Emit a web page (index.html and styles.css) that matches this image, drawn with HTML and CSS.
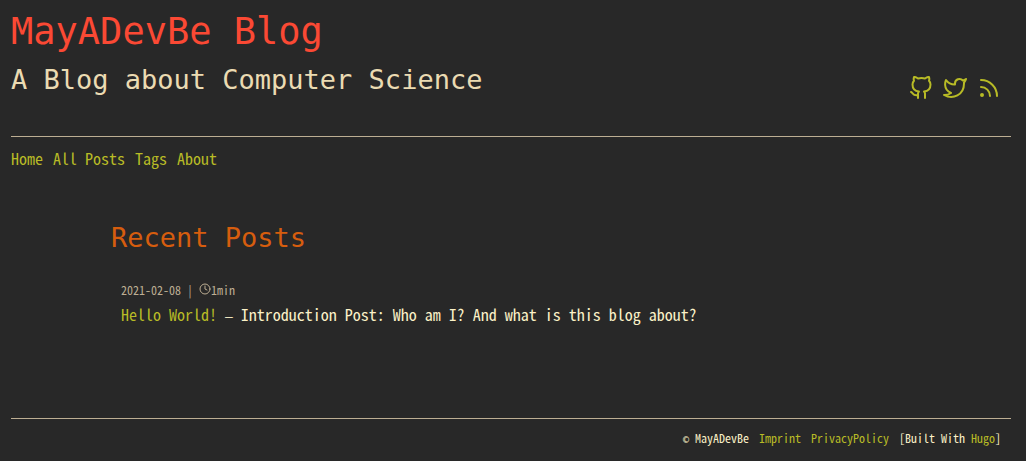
FILE: index.html
```html
<!DOCTYPE html>
<html lang="en">
<head>
<meta charset="utf-8">
<meta name="viewport" content="width=device-width, initial-scale=1">
<title>MayADevBe Blog</title>
<link rel="stylesheet" href="styles.css">
</head>
<body>
<header class="site-header">
  <div class="branding">
    <h1 class="site-title">MayADevBe Blog</h1>
    <p class="site-subtitle">A Blog about Computer Science</p>
  </div>
  <div class="social">
    <a href="#" aria-label="GitHub"><svg class="icon" viewBox="0 0 24 24"><path d="M9 19c-5 1.500-5-2.500-7-3m14 6v-3.870a3.370 3.370 0 0 0-.94-2.610c3.140-.35 6.440-1.540 6.440-7A5.440 5.440 0 0 0 20 4.770 5.070 5.070 0 0 0 19.910 1S18.730.65 16 2.480a13.380 13.380 0 0 0-7 0C6.270.65 5.090 1 5.090 1A5.070 5.070 0 0 0 5 4.770a5.440 5.440 0 0 0-1.500 3.780c0 5.420 3.300 6.610 6.440 7A3.370 3.370 0 0 0 9 18.130V22"/></svg></a>
    <a href="#" aria-label="Twitter"><svg class="icon" viewBox="0 0 24 24"><path d="M23 3a10.900 10.900 0 0 1-3.140 1.530 4.480 4.480 0 0 0-7.860 3v1A10.660 10.660 0 0 1 3 4s-4 9 5 13a11.640 11.640 0 0 1-7 2c9 5 20 0 20-11.500a4.500 4.500 0 0 0-.08-.83A7.720 7.720 0 0 0 23 3z"/></svg></a>
    <a href="#" aria-label="RSS"><svg class="icon" viewBox="0 0 24 24"><circle cx="5" cy="19" r="1"/><path d="M4 4a16 16 0 0 1 16 16M4 11a9 9 0 0 1 9 9"/></svg></a>
  </div>
</header>
<nav class="site-nav">
  <a href="#">Home</a>
  <a href="#">All Posts</a>
  <a href="#">Tags</a>
  <a href="#">About</a>
</nav>
<main class="content">
  <h2 class="section-title">Recent Posts</h2>
  <article class="post">
    <p class="post-meta">2021-02-08 | <svg class="clock" viewBox="0 0 24 24"><circle cx="12" cy="12" r="10"/><path d="M12 6v6l4 2"/></svg>1min</p>
    <p class="post-summary"><a href="#">Hello World!</a> <span class="dash">—</span> Introduction Post: Who am I? And what is this blog about?</p>
  </article>
</main>
<footer class="site-footer">
  <span><span class="copyright">©</span> MayADevBe</span>
  <a href="#">Imprint</a>
  <a href="#">PrivacyPolicy</a>
  <span>[Built With <a href="#">Hugo</a>]</span>
</footer>
</body>
</html>
```
FILE: styles.css
```css
* { box-sizing: border-box; }
body {
  margin: 0;
  padding: 0 15px 0 11px;
  background: #282828;
  color: #fbf1c7;
  font: 16px/24px "Noto Sans Mono CJK SC", "DejaVu Sans Mono", monospace;
}
h1, h2, p { margin: 0; font-weight: 400; }
a { color: #b8bb26; text-decoration: none; }
.site-header {
  display: flex;
  justify-content: space-between;
  align-items: flex-end;
  padding: 8px 10px 36px 0;
  border-bottom: 1px solid #bdae93;
}
.site-title, .site-subtitle, .section-title { font-family: "DejaVu Sans Mono", monospace; }
.site-title { color: #fb4934; font-size: 37px; line-height: 48px; }
.site-subtitle { padding-top: 4px; color: #ebdbb2; font-size: 27px; line-height: 40px; }
.social { display: flex; gap: 10px; }
.icon {
  display: block;
  width: 24px;
  height: 24px;
  fill: none;
  stroke: currentColor;
  stroke-width: 2;
  stroke-linecap: round;
  stroke-linejoin: round;
}
.site-nav { display: flex; gap: 10px; padding-top: 9px; }
.content { padding: 48px 100px 0; }
.section-title { color: #d65d0e; font-size: 27px; line-height: 40px; }
.post { padding: 20px 10px 0; }
.post-meta { color: #bdae93; font-size: 12px; line-height: 24px; }
.clock {
  width: 12px;
  height: 12px;
  vertical-align: 0;
  fill: none;
  stroke: currentColor;
  stroke-width: 2;
  stroke-linecap: round;
}
.dash, .copyright { font-family: "DejaVu Sans Mono", monospace; line-height: 1; }
.dash { font-size: 13px; }
.copyright { font-size: 10px; }
.site-footer {
  display: flex;
  justify-content: flex-end;
  gap: 10px;
  margin-top: 92px;
  padding: 7px 10px 10px 0;
  border-top: 1px solid #bdae93;
  font-size: 12px;
}
```
